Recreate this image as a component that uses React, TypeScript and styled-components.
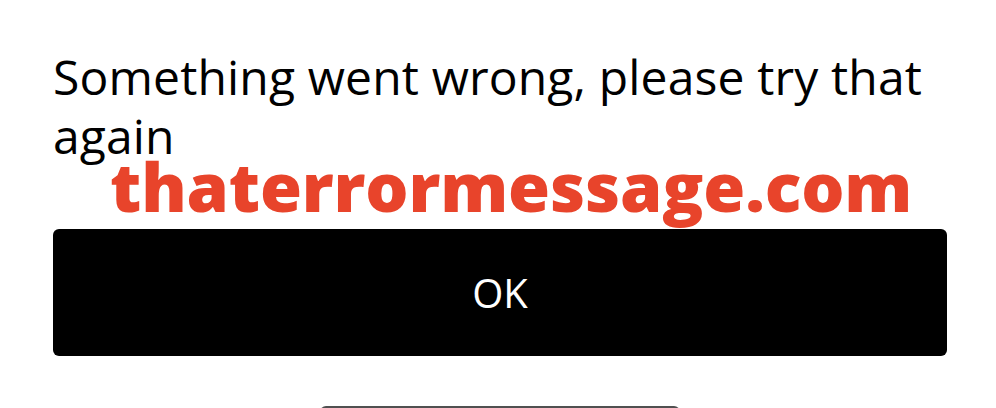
import React from "react";
import styled, { createGlobalStyle } from "styled-components";

const Global = createGlobalStyle`
  html, body {
    margin: 0;
    padding: 0;
    background: #ffffff;
    overflow: hidden;
  }
  body {
    width: 996px;
    height: 408px;
  }
`;

const Screen = styled.div`
  position: relative;
  width: 996px;
  height: 408px;
  box-sizing: border-box;
  padding: 47px 49px 0 53px;
  display: flex;
  flex-direction: column;
  align-items: stretch;
  background: #fff;
  overflow: hidden;
`;

const Message = styled.p`
  margin: 0;
  flex-shrink: 0;
  font-family: "Open Sans", "Liberation Sans", sans-serif;
  font-size: 48px;
  line-height: 59px;
  font-weight: 400;
  color: #000;
  letter-spacing: 0.15px;
  max-width: 890px;
`;

const OkButton = styled.button`
  margin-top: 64px;
  flex-shrink: 0;
  height: 127px;
  width: 894px;
  border: none;
  border-radius: 6px;
  background: #000;
  color: #fff;
  font-family: "Open Sans", "Liberation Sans", sans-serif;
  font-size: 40px;
  font-weight: 400;
  display: flex;
  align-items: center;
  justify-content: center;
  padding: 0;
  cursor: pointer;
`;

const HomeBar = styled.div`
  margin: 50px auto 0;
  flex-shrink: 0;
  width: 360px;
  height: 12px;
  border-radius: 6px;
  background: #505050;
`;

const Watermark = styled.div`
  position: absolute;
  left: 110px;
  top: 136px;
  font-family: "Open Sans", "Lato", sans-serif;
  font-weight: 800;
  font-size: 68px;
  line-height: 100px;
  color: #e8442b;
  letter-spacing: -0.15px;
  white-space: nowrap;
  pointer-events: none;
`;

export default function App() {
  return (
    <>
      <Global />
      <Screen>
        <Message>Something went wrong, please try that again</Message>
        <OkButton>OK</OkButton>
        <HomeBar />
        <Watermark>thaterrormessage.com</Watermark>
      </Screen>
    </>
  );
}
